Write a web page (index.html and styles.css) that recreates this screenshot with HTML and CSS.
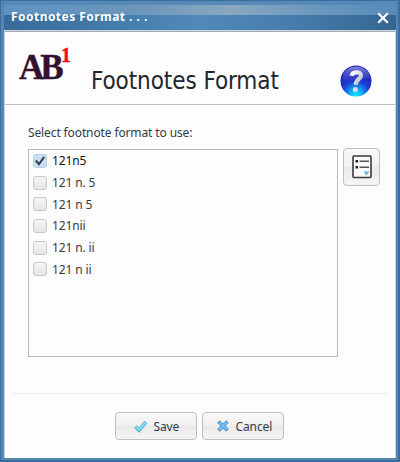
FILE: index.html
```html
<!DOCTYPE html>
<html lang="en">
<head>
<meta charset="utf-8">
<title>Footnotes Format</title>
<link rel="stylesheet" href="styles.css">
</head>
<body>
<div class="window">
  <div class="titlebar">
    <span class="title">Footnotes Format . . .</span>
    <svg class="close" width="12" height="12" viewBox="0 0 12 12"><path d="M1.200 1.200 10.800 10.800M10.800 1.200 1.200 10.800" stroke="#fff" stroke-width="2.200" fill="none"/></svg>
  </div>
  <div class="panel">
    <div class="header">
      <div class="logo"><span class="ab">AB</span><span class="one">1</span></div>
      <h1>Footnotes Format</h1>
      <svg class="help" width="32" height="32" viewBox="0 0 32 32">
        <defs>
          <radialGradient id="ball" cx=".5" cy=".95" r=".9"><stop offset="0" stop-color="#10e8ff"/><stop offset=".2" stop-color="#10b0f4"/><stop offset=".5" stop-color="#1a3cd4"/><stop offset="1" stop-color="#2018a4"/></radialGradient>
          <linearGradient id="shine" x1="0" y1="0" x2="0" y2="1"><stop offset="0" stop-color="#7c86dc"/><stop offset="1" stop-color="#3036bc" stop-opacity=".5"/></linearGradient>
          <linearGradient id="mark" x1="0" y1="0" x2="1" y2="1"><stop offset="0" stop-color="#fff"/><stop offset="1" stop-color="#b4b8cc"/></linearGradient>
        </defs>
        <circle cx="16" cy="16" r="15.500" fill="url(#ball)"/>
        <path d="M2.500 15C2 6 9 1.500 16 1.500S30 6 29.500 13C21 12 12 19 2.500 15Z" fill="url(#shine)"/>
        <path d="M11.500 10.700C12.500 6.400 21 6 21 10.600C21 14.500 16 14 15.700 19.800" fill="none" stroke="url(#mark)" stroke-width="4.200"/>
        <circle cx="15.300" cy="24.500" r="2.500" fill="#d4dcf0"/>
      </svg>
    </div>
    <div class="content">
      <div class="label">Select footnote format to use:</div>
      <div class="row">
        <ul class="list">
          <li class="on"><span class="box"><svg width="10" height="10" viewBox="0 0 10 10"><path d="M.8 4.500 4 8.200 9.200 1" fill="none" stroke="#333b4b" stroke-width="2"/></svg></span>121n5</li>
          <li><span class="box"></span>121 n. 5</li>
          <li><span class="box"></span>121 n 5</li>
          <li><span class="box"></span>121nii</li>
          <li><span class="box"></span>121 n. ii</li>
          <li><span class="box"></span>121 n ii</li>
        </ul>
        <div class="tool"><svg width="20" height="24" viewBox="0 0 20 24"><rect x="1" y="1" width="18" height="21.500" rx="1" fill="#fafafa" stroke="#3a3a3c" stroke-width="1.600"/><path d="M3.500 5H6v2.500H3.500zM3.500 11H6v2.500H3.500z" fill="#222"/><path d="M7.500 6.300H17M7.500 12.300H17" stroke="#555" stroke-width="1.500"/><path d="M11.500 16.500h6l-3 4z" fill="#65b5e2"/></svg></div>
      </div>
    </div>
    <div class="footer">
      <div class="btn"><svg width="14" height="13" viewBox="0 0 14 13"><path d="M1.500 6.500 5 10 12 2" fill="none" stroke="#58a9be" stroke-width="3.600"/><path d="M1.900 6.500 5 9.500 11.700 2.300" fill="none" stroke="#82daf0" stroke-width="2.400"/></svg><span>Save</span></div>
      <div class="btn cancel"><svg width="12" height="12" viewBox="0 0 12 12"><path d="M1.500 1.500 10.500 10.500M10.500 1.500 1.500 10.500" stroke="#4b91c9" stroke-width="3.800"/><path d="M2 2 10 10M10 2 2 10" stroke="#78bdee" stroke-width="2.200"/></svg><span>Cancel</span></div>
    </div>
  </div>
</div>
</body>
</html>
```
FILE: styles.css
```css
* { box-sizing: border-box; }
body { margin: 0; font-family: "Noto Sans", sans-serif; font-size: 12px; color: #333b44; }
.window {
  width: 400px; height: 462px;
  display: flex; flex-direction: column;
  background: #5587b5;
  border: 1px solid #3b6e9f; border-bottom-width: 2px; border-right-width: 2px;
  padding: 0 2px 2px 3px;
}
.titlebar {
  height: 29px; flex: none; display: flex; align-items: center; justify-content: space-between;
  padding: 3px 7px 0 7px;
  background:
    linear-gradient(90deg, #386b99 0%, #427aaa 25%, #5189b9 50%, #457cab 75%, #34658f 100%) 0 100% / 100% 15px no-repeat,
    linear-gradient(90deg, #5f91c1 0%, #6d97bb 35%, #89a8bf 58%, #6d98bf 78%, #568bb9 100%) 0 4px / 100% 12px no-repeat,
    #5689b8;
}
.title { color: #fff; font-weight: 700; font-size: 12px; line-height: 18px; letter-spacing: .46px; }
.close { margin-top: 2px; }
.panel { flex: 1; display: flex; flex-direction: column; background: #fdfdfd; border: 1px solid #c7d3de; border-width: 1px 1px 0; }
.header { height: 74px; flex: none; display: flex; border-bottom: 1px solid #bfc1c4; border-top: 1px solid #a6aeb7; }
.logo { width: 86px; padding: 17px 0 0 14px; display: flex; flex: none; color: #32102f; font-family: "Liberation Serif", serif; font-weight: 700; }
.ab { font-size: 35px; line-height: 38px; width: 43px; letter-spacing: -4px; -webkit-text-stroke: .4px #32102f; }
.one { font-size: 20px; line-height: 20px; margin-top: -4px; margin-left: -1px; color: #ff0712; -webkit-text-stroke: .4px #ff0712; }
h1 { width: 249px; flex: none; margin: 34px 0 0; font: 400 24px/30px "DejaVu Sans Condensed", "DejaVu Sans", sans-serif; font-stretch: condensed; color: #22262d; white-space: nowrap; letter-spacing: -.08px; }
.help { margin-top: 33px; flex: none; }
.content { height: 289px; flex: none; margin: 0 7px; padding: 19px 7px 0 16px; border-bottom: 1px solid #e8edef; }
.label { line-height: 18px; height: 25px; white-space: nowrap; letter-spacing: -.12px; }
.row { display: flex; gap: 5px; }
.list { margin: 0; list-style: none; width: 310px; height: 208px; padding: 0 0 0 4px; border: 1px solid #b9b9bb; }
li { height: 21.700px; display: flex; align-items: center; gap: 5px; white-space: nowrap; letter-spacing: -.12px; }
li.on { color: #111; }
.box { width: 14px; height: 14px; border: 1px solid #c6c8cb; border-radius: 3px; background: linear-gradient(#f5f5f5, #e5e5e6); display: grid; place-items: center; }
.on .box { background: #c9dff0; border-color: #b4cfe2; }
.tool, .btn { border: 1px solid #bfbfc2; border-radius: 4px; background: linear-gradient(#f8f8f8 0%, #f1f1f2 48%, #e9e9ea 52%, #f5f5f5 100%); }
.tool { width: 37px; height: 38px; margin-top: -1px; display: grid; place-items: center; }
.footer { display: flex; justify-content: center; gap: 5px; padding: 18px 2px 0 0; }
.btn { width: 82px; height: 28px; display: flex; align-items: center; padding-left: 18px; gap: 6px; letter-spacing: -.1px; }
.cancel { padding-left: 14px; gap: 7px; }
```
